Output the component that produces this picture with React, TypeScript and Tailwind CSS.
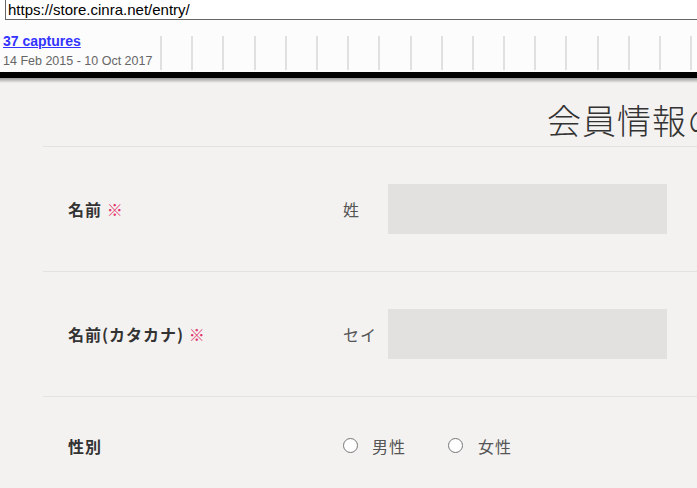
export default function App() {
  const ticks = Array.from({ length: 18 });
  const jp = "font-['Noto_Sans_CJK_JP','Noto_Sans',sans-serif]";

  return (
    <div className="w-[697px] h-[488px] overflow-hidden bg-[#f3f2f1]">
      {/* wayback toolbar */}
      <div className="bg-white h-[72px] font-['Liberation_Sans',Arial,sans-serif]">
        <div className="h-[20px] pl-[5px] bg-white flex">
          <div className="flex-1 -mt-px h-[21px] border border-r-0 border-[#666] pl-[2px] text-[15px] leading-[19px] text-black whitespace-nowrap">
            https://store.cinra.net/entry/
          </div>
        </div>
        <div className="h-[52px] bg-[#fcfcfc] flex">
          <div className="w-[160px] shrink-0 pl-[3px] pt-[13px] whitespace-nowrap">
            <a href="#" className="block text-[14px] leading-[16px] font-bold text-[#3333ff] underline">37 captures</a>
            <div className="mt-[5px] text-[12.5px] leading-[14px] text-[#666]">14 Feb 2015 - 10 Oct 2017</div>
          </div>
          <div className="flex pt-[16px] pb-[2px]">
            {ticks.map((_, i) => (
              <div key={i} className="w-[31.2px] shrink-0 border-l-2 border-[#e0e0e0]" />
            ))}
          </div>
        </div>
      </div>
      <div className="h-[6px] bg-black" />
      <div className="h-[5px] bg-gradient-to-b from-[#9a9a9a] to-[#f3f2f1]" />

      {/* page */}
      <div className={jp}>
        <div className="pt-[17px] pl-[547px] h-[63px] whitespace-nowrap text-[34px] leading-[40px] font-light tracking-[1px] text-[#333]">
          会員情報の登録
        </div>
        <div className="ml-[43px]">
          <div className="h-[125px] border-t border-[#e3e2e1] flex items-center">
            <div className="w-[300px] pl-[25px] text-[16px] font-bold text-[#333] tracking-[1px]">
              名前 <span className="text-[#e2336b] font-normal">※</span>
            </div>
            <div className="w-[45px] text-[16px] text-[#555]">姓</div>
            <div className="w-[279px] h-[50px] bg-[#e2e1e0]" />
          </div>
          <div className="h-[125px] border-t border-[#e3e2e1] flex items-center">
            <div className="w-[300px] pl-[25px] text-[16px] font-bold text-[#333] tracking-[1px]">
              名前(カタカナ) <span className="text-[#e2336b] font-normal">※</span>
            </div>
            <div className="w-[45px] text-[16px] text-[#555] tracking-[1px]">セイ</div>
            <div className="w-[279px] h-[50px] bg-[#e2e1e0]" />
          </div>
          <div className="h-[98px] border-t border-[#e3e2e1] flex items-center">
            <div className="w-[300px] pl-[25px] text-[16px] font-bold text-[#333] tracking-[1px]">性別</div>
            <label className="flex items-center gap-[14px] w-[105px] text-[16px] text-[#555] tracking-[1px]">
              <span className="w-[15px] h-[15px] rounded-full border border-[#767676] bg-white" />
              男性
            </label>
            <label className="flex items-center gap-[15px] text-[16px] text-[#555] tracking-[1px]">
              <span className="w-[15px] h-[15px] rounded-full border border-[#767676] bg-white" />
              女性
            </label>
          </div>
        </div>
      </div>
    </div>
  );
}
